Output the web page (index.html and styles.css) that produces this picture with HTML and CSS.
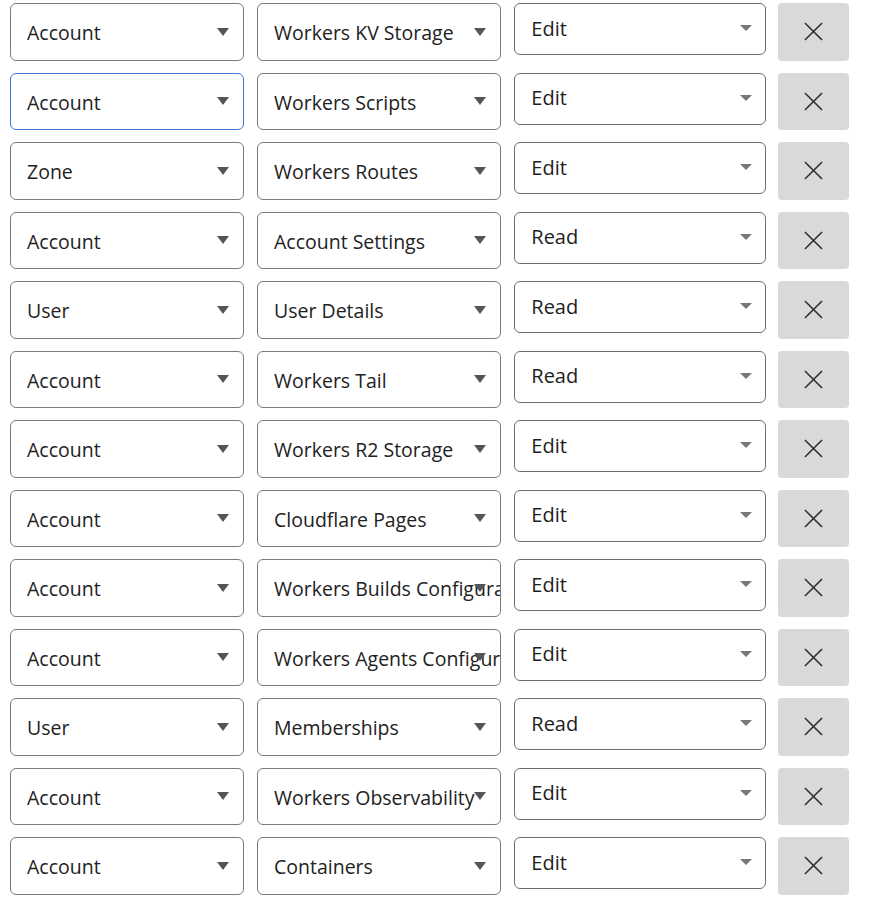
FILE: index.html
```html
<!DOCTYPE html>
<html>
<head>
<meta charset="utf-8">
<link rel="stylesheet" href="styles.css">
</head>
<body>
<div class="list">
  <div class="row"><div class="sel c1"><span>Account</span></div><div class="sel c2"><span>Workers KV Storage</span></div><div class="sel c3"><span>Edit</span></div><button class="rm"><svg viewBox="0 0 20 20"><path d="M1 1L19 19M19 1L1 19"/></svg></button></div>
  <div class="row"><div class="sel c1 focus"><span>Account</span></div><div class="sel c2"><span>Workers Scripts</span></div><div class="sel c3"><span>Edit</span></div><button class="rm"><svg viewBox="0 0 20 20"><path d="M1 1L19 19M19 1L1 19"/></svg></button></div>
  <div class="row"><div class="sel c1"><span>Zone</span></div><div class="sel c2"><span>Workers Routes</span></div><div class="sel c3"><span>Edit</span></div><button class="rm"><svg viewBox="0 0 20 20"><path d="M1 1L19 19M19 1L1 19"/></svg></button></div>
  <div class="row"><div class="sel c1"><span>Account</span></div><div class="sel c2"><span>Account Settings</span></div><div class="sel c3"><span>Read</span></div><button class="rm"><svg viewBox="0 0 20 20"><path d="M1 1L19 19M19 1L1 19"/></svg></button></div>
  <div class="row"><div class="sel c1"><span>User</span></div><div class="sel c2"><span>User Details</span></div><div class="sel c3"><span>Read</span></div><button class="rm"><svg viewBox="0 0 20 20"><path d="M1 1L19 19M19 1L1 19"/></svg></button></div>
  <div class="row"><div class="sel c1"><span>Account</span></div><div class="sel c2"><span>Workers Tail</span></div><div class="sel c3"><span>Read</span></div><button class="rm"><svg viewBox="0 0 20 20"><path d="M1 1L19 19M19 1L1 19"/></svg></button></div>
  <div class="row"><div class="sel c1"><span>Account</span></div><div class="sel c2"><span>Workers R2 Storage</span></div><div class="sel c3"><span>Edit</span></div><button class="rm"><svg viewBox="0 0 20 20"><path d="M1 1L19 19M19 1L1 19"/></svg></button></div>
  <div class="row"><div class="sel c1"><span>Account</span></div><div class="sel c2"><span>Cloudflare Pages</span></div><div class="sel c3"><span>Edit</span></div><button class="rm"><svg viewBox="0 0 20 20"><path d="M1 1L19 19M19 1L1 19"/></svg></button></div>
  <div class="row"><div class="sel c1"><span>Account</span></div><div class="sel c2"><span>Workers Builds Configuration</span></div><div class="sel c3"><span>Edit</span></div><button class="rm"><svg viewBox="0 0 20 20"><path d="M1 1L19 19M19 1L1 19"/></svg></button></div>
  <div class="row"><div class="sel c1"><span>Account</span></div><div class="sel c2"><span>Workers Agents Configuration</span></div><div class="sel c3"><span>Edit</span></div><button class="rm"><svg viewBox="0 0 20 20"><path d="M1 1L19 19M19 1L1 19"/></svg></button></div>
  <div class="row"><div class="sel c1"><span>User</span></div><div class="sel c2"><span>Memberships</span></div><div class="sel c3"><span>Read</span></div><button class="rm"><svg viewBox="0 0 20 20"><path d="M1 1L19 19M19 1L1 19"/></svg></button></div>
  <div class="row"><div class="sel c1"><span>Account</span></div><div class="sel c2"><span>Workers Observability</span></div><div class="sel c3"><span>Edit</span></div><button class="rm"><svg viewBox="0 0 20 20"><path d="M1 1L19 19M19 1L1 19"/></svg></button></div>
  <div class="row"><div class="sel c1"><span>Account</span></div><div class="sel c2"><span>Containers</span></div><div class="sel c3"><span>Edit</span></div><button class="rm"><svg viewBox="0 0 20 20"><path d="M1 1L19 19M19 1L1 19"/></svg></button></div>
</div>
</body>
</html>
```

FILE: styles.css
```css
html, body {
  margin: 0;
  background: #ffffff;
}
body {
  font-family: "Open Sans", "Noto Sans", sans-serif;
  color: #222222;
}
.list {
  display: flex;
  flex-direction: column;
  gap: 12px;
  padding: 3px 0 0 10px;
}
.row {
  display: flex;
  align-items: flex-start;
  gap: 13px;
  height: 57.5px;
}
.sel {
  position: relative;
  box-sizing: border-box;
  border: 1px solid #7a7a7a;
  border-radius: 6px;
  background: #fff;
  display: flex;
  align-items: center;
  overflow: hidden;
  white-space: nowrap;
  font-size: 19.5px;
  padding-left: 16px;
}
.sel span {
  display: block;
  flex: 1 1 auto;
  min-width: 0;
  overflow: hidden;
}
.sel::after {
  content: "";
  position: absolute;
  top: 50%;
  right: 14px;
  margin-top: -4px;
  border-left: 6.5px solid transparent;
  border-right: 6.5px solid transparent;
  border-top: 8px solid #555555;
}
.c1 {
  width: 234px;
  height: 57.5px;
  padding-top: 2px;
}
.c2 {
  width: 244.3px;
  height: 57.5px;
  padding-top: 2px;
}
.c3 {
  width: 251.3px;
  height: 52px;
  border-color: #6e6e6e;
  padding-left: 16px;
  padding-bottom: 2px;
  font-size: 20px;
  color: #1e1e1e;
}
.c3::after {
  right: 13px;
  margin-top: -4px;
  border-left-width: 6.5px;
  border-right-width: 6.5px;
  border-top: 6px solid #777777;
}
.focus {
  border-color: #3b78cf;
}
.rm {
  width: 71px;
  height: 57.5px;
  border: none;
  border-radius: 4px;
  background: #d9d9d9;
  padding: 0;
  margin: 0;
  margin-left: -0.5px;
  display: flex;
  align-items: center;
  justify-content: center;
}
.rm svg {
  width: 19px;
  height: 19px;
  fill: none;
  stroke: #2b2b2b;
  stroke-width: 1.6;
}
```
